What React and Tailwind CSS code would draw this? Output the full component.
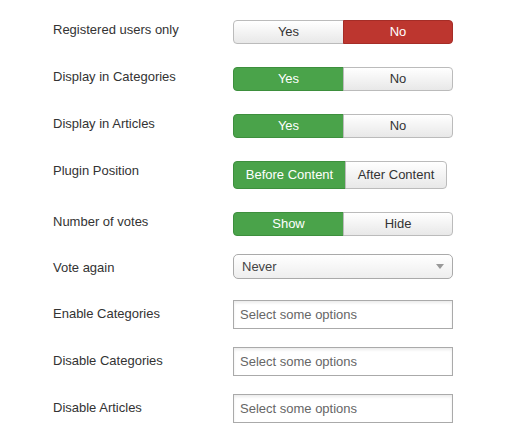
import React from 'react';

const font = { fontFamily: '"Liberation Sans", Arial, sans-serif' };

function Toggle({ options, active, color, widths }) {
  return (
    <div className="flex">
      {options.map((opt, i) => {
        const on = i === active;
        const first = i === 0;
        const last = i === options.length - 1;
        let cls = 'flex items-center justify-center text-[13px] border ';
        cls += first ? 'rounded-l-[4px] ' : '';
        cls += last ? 'rounded-r-[4px] ' : '';
        cls += !first ? '-ml-px ' : '';
        if (on) {
          cls += color === 'red'
            ? 'bg-[#bd362f] border-[#a52d27] text-white '
            : 'bg-[#4aa34a] border-[#3d8f3d] text-white ';
        } else {
          cls += 'bg-gradient-to-b from-white to-[#e8e8e8] border-[#bbbbbb] text-[#333] ';
        }
        return (
          <div key={opt} className={cls + widths[i]}>
            {opt}
          </div>
        );
      })}
    </div>
  );
}

function Row({ label, children, className, pad }) {
  return (
    <div className={'flex ' + className}>
      <div className={'w-[180px] text-[13px] leading-[18px] text-[#333] ' + (pad ? 'pt-[5px]' : 'pt-px')}>
        {label}
      </div>
      {children}
    </div>
  );
}

function MultiInput() {
  return (
    <div className="w-[220px] h-[29px] border border-[#aaaaaa] bg-white shadow-[inset_0_2px_3px_rgba(0,0,0,0.08)] flex items-center px-[6px] text-[13px] text-[#666]">
      Select some options
    </div>
  );
}

export default function App() {
  return (
    <div className="w-[526px] h-[439px] bg-white pt-[20px] pl-[53px]" style={font}>
      <Row label="Registered users only">
        <Toggle options={['Yes', 'No']} active={1} color="red" widths={['w-[111px] h-[24px]', 'w-[110px] h-[24px]']} />
      </Row>
      <Row label="Display in Categories" className="mt-[23px]">
        <Toggle options={['Yes', 'No']} active={0} color="green" widths={['w-[111px] h-[24px]', 'w-[110px] h-[24px]']} />
      </Row>
      <Row label="Display in Articles" className="mt-[23px]">
        <Toggle options={['Yes', 'No']} active={0} color="green" widths={['w-[111px] h-[24px]', 'w-[110px] h-[24px]']} />
      </Row>
      <Row label="Plugin Position" className="mt-[23px]">
        <Toggle options={['Before Content', 'After Content']} active={0} color="green" widths={['w-[113px] h-[28px]', 'w-[102px] h-[28px]']} />
      </Row>
      <Row label="Number of votes" className="mt-[23px]">
        <Toggle options={['Show', 'Hide']} active={0} color="green" widths={['w-[111px] h-[24px]', 'w-[110px] h-[24px]']} />
      </Row>
      <Row label="Vote again" className="mt-[18px]" pad>
        <div className="w-[220px] h-[25px] border border-[#aaaaaa] rounded-[5px] bg-gradient-to-b from-white to-[#eeeeee] flex items-center justify-between pl-[8px] pr-[8px] text-[13px] text-[#444]">
          <span>Never</span>
          <svg width="8" height="5" viewBox="0 0 8 5">
            <path d="M0 0 L8 0 L4 5 Z" fill="#999" />
          </svg>
        </div>
      </Row>
      <Row label="Enable Categories" className="mt-[21px]" pad>
        <MultiInput />
      </Row>
      <Row label="Disable Categories" className="mt-[18px]" pad>
        <MultiInput />
      </Row>
      <Row label="Disable Articles" className="mt-[18px]" pad>
        <MultiInput />
      </Row>
    </div>
  );
}
